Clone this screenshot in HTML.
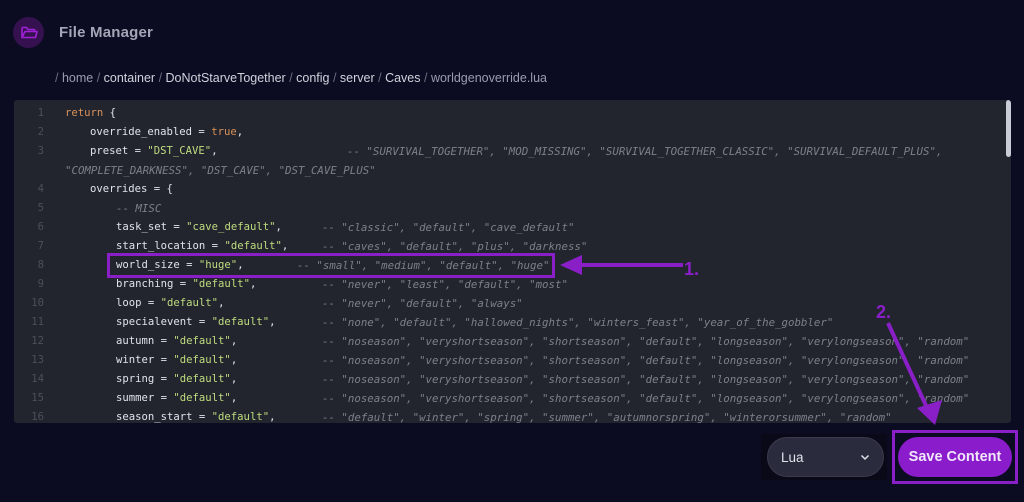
<!DOCTYPE html>
<html><head><meta charset="utf-8"><style>
*{margin:0;padding:0;box-sizing:border-box}
body{width:1024px;height:502px;background:#0b0c22;overflow:hidden;position:relative;font-family:"Liberation Sans",sans-serif}
.ic{position:absolute;left:13px;top:17px;width:31px;height:31px;border-radius:50%;background:#35124f}
.title{position:absolute;left:59px;top:24px;font-size:15px;color:#a3a6b6;font-weight:bold;letter-spacing:0.2px}
.bc{position:absolute;left:55px;top:71px;font-size:12.5px;color:#d0d3dc}
.bc i{font-style:normal;color:#6a6d80}
.bc .l{color:#9a9db0}
.ed{position:absolute;left:14px;top:100px;width:997px;height:323px;background:#22252e;border-radius:3px;overflow:hidden;font-family:"DejaVu Sans Mono",monospace;font-size:10.6px;color:#dfe3ea}
.ed div{position:absolute;white-space:pre;line-height:19px}
.n{left:0;width:30px;text-align:right;color:#4b4f5a}
.k{color:#d9925a}.s{color:#bfdc7e}.c{color:#7c808b;font-style:italic;font-size:10.75px}
.sb{position:absolute;left:992px;top:0;width:5px;height:57px;background:#c9ccd6;border-radius:3px}
</style></head><body>
<div class="ic"><svg width="31" height="31" viewBox="0 0 31 31"><path d="M9 10.5h4.5l1.5 2h6.5v2.2M9 10.5v10h13.5l1.5-6H12l-3 6" fill="none" stroke="#a020d8" stroke-width="1.6" stroke-linejoin="round"/></svg></div>
<div class="title">File Manager</div>
<div class="bc"><i>/ </i><span class="l">home</span><i> / </i>container<i> / </i>DoNotStarveTogether<i> / </i>config<i> / </i>server<i> / </i>Caves<i> / </i><span class="l">worldgenoverride.lua</span></div>
<div class="ed">
<div class="n" style="top:4px">1</div><div style="left:51px;top:4px"><span class="k">return</span> {</div>
<div class="n" style="top:23px">2</div><div style="left:76px;top:23px">override_enabled = <span class="k">true</span>,</div>
<div class="n" style="top:42px">3</div><div style="left:76px;top:42px">preset = <span class="s">"DST_CAVE"</span>,</div><div class="c" style="left:333px;top:42px">-- "SURVIVAL_TOGETHER", "MOD_MISSING", "SURVIVAL_TOGETHER_CLASSIC", "SURVIVAL_DEFAULT_PLUS",</div>
<div class="c" style="left:51px;top:61px">"COMPLETE_DARKNESS", "DST_CAVE", "DST_CAVE_PLUS"</div>
<div class="n" style="top:80px">4</div><div style="left:76px;top:80px">overrides = {</div>
<div class="n" style="top:99px">5</div><div class="c" style="left:102px;top:99px">-- MISC</div>
<div class="n" style="top:118px">6</div><div style="left:102px;top:118px">task_set = <span class="s">"cave_default"</span>,</div><div class="c" style="left:308px;top:118px">-- "classic", "default", "cave_default"</div>
<div class="n" style="top:137px">7</div><div style="left:102px;top:137px">start_location = <span class="s">"default"</span>,</div><div class="c" style="left:308px;top:137px">-- "caves", "default", "plus", "darkness"</div>
<div class="n" style="top:156px">8</div><div style="left:102px;top:156px">world_size = <span class="s">"huge"</span>,</div><div class="c" style="left:283px;top:156px">-- "small", "medium", "default", "huge"</div>
<div class="n" style="top:175px">9</div><div style="left:102px;top:175px">branching = <span class="s">"default"</span>,</div><div class="c" style="left:308px;top:175px">-- "never", "least", "default", "most"</div>
<div class="n" style="top:194px">10</div><div style="left:102px;top:194px">loop = <span class="s">"default"</span>,</div><div class="c" style="left:308px;top:194px">-- "never", "default", "always"</div>
<div class="n" style="top:213px">11</div><div style="left:102px;top:213px">specialevent = <span class="s">"default"</span>,</div><div class="c" style="left:308px;top:213px">-- "none", "default", "hallowed_nights", "winters_feast", "year_of_the_gobbler"</div>
<div class="n" style="top:232px">12</div><div style="left:102px;top:232px">autumn = <span class="s">"default"</span>,</div><div class="c" style="left:308px;top:232px">-- "noseason", "veryshortseason", "shortseason", "default", "longseason", "verylongseason", "random"</div>
<div class="n" style="top:251px">13</div><div style="left:102px;top:251px">winter = <span class="s">"default"</span>,</div><div class="c" style="left:308px;top:251px">-- "noseason", "veryshortseason", "shortseason", "default", "longseason", "verylongseason", "random"</div>
<div class="n" style="top:270px">14</div><div style="left:102px;top:270px">spring = <span class="s">"default"</span>,</div><div class="c" style="left:308px;top:270px">-- "noseason", "veryshortseason", "shortseason", "default", "longseason", "verylongseason", "random"</div>
<div class="n" style="top:289px">15</div><div style="left:102px;top:289px">summer = <span class="s">"default"</span>,</div><div class="c" style="left:308px;top:289px">-- "noseason", "veryshortseason", "shortseason", "default", "longseason", "verylongseason", "random"</div>
<div class="n" style="top:308px">16</div><div style="left:102px;top:308px">season_start = <span class="s">"default"</span>,</div><div class="c" style="left:308px;top:308px">-- "default", "winter", "spring", "summer", "autumnorspring", "winterorsummer", "random"</div>
<div class="sb"></div>
</div>
<div style="position:absolute;left:761px;top:434px;width:126px;height:46px;background:#090918"></div>
<div style="position:absolute;left:767px;top:437px;width:117px;height:40px;background:#2a2b3c;border:1px solid #3a3b4e;border-radius:20px;color:#e0e2ea;font-size:13.5px;padding:12px 0 0 13px">Lua<svg style="position:absolute;left:92px;top:16px" width="10" height="7" viewBox="0 0 10 7"><path d="M1.5 1.5l3.5 3.5 3.5-3.5" fill="none" stroke="#e0e2ea" stroke-width="1.5"/></svg></div>
<div style="position:absolute;left:898px;top:437px;width:114px;height:40px;background:#8a1ccc;border-radius:20px;color:#f1e6fb;font-size:14.5px;font-weight:bold;text-align:center;line-height:41px">Save Content</div>
<div style="position:absolute;left:892px;top:430px;width:126px;height:54px;border:3px solid #8a1fc8"></div>
<div style="position:absolute;left:107px;top:253px;width:448px;height:25px;border:3px solid #8a1fc8"></div>
<svg style="position:absolute;left:0;top:0" width="1024" height="502">
<path d="M580 265H683" stroke="#8a1fc8" stroke-width="4"/>
<path d="M560 265L582 255V275Z" fill="#8a1fc8"/>
<text x="684" y="275" font-family="Liberation Sans,sans-serif" font-size="18" font-weight="bold" fill="#8a1fc8">1.</text>
<text x="876" y="318" font-family="Liberation Sans,sans-serif" font-size="18" font-weight="bold" fill="#8a1fc8">2.</text>
<path d="M888 323L928 410" stroke="#8a1fc8" stroke-width="4"/>
<path d="M935 425L917 408L942 400Z" fill="#8a1fc8"/>
</svg>
</body></html>
